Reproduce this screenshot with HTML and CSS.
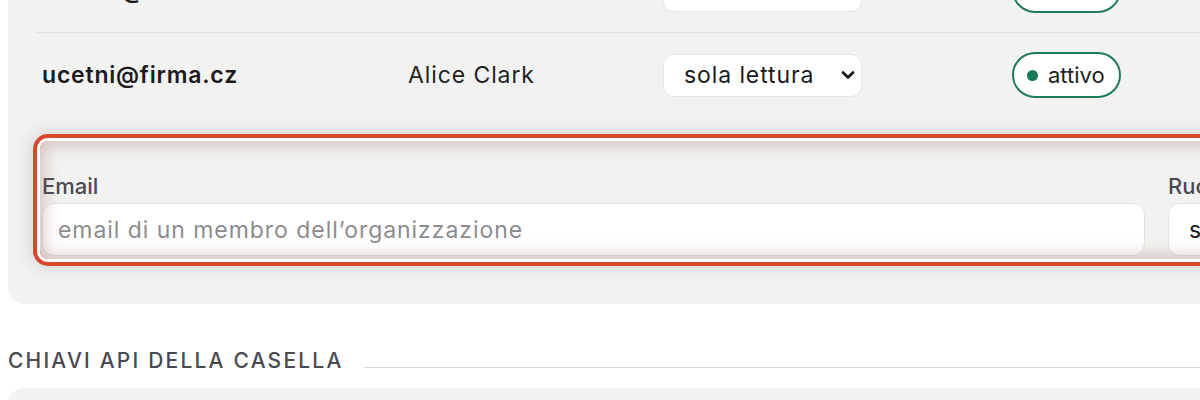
FILE: index.html
```html
<!DOCTYPE html>
<html lang="it">
<head>
<meta charset="utf-8">
<title>Membri</title>
<link rel="stylesheet" href="styles.css">
</head>
<body>
<div class="page">
  <section class="panel members">
    <div class="row">
      <div class="cell email">fatture@firma.cz</div>
      <div class="cell name">Jan Novák</div>
      <div class="cell">
        <div class="select"><span>modifica</span>
          <svg class="chev" width="14" height="10" viewBox="0 0 14 10"><path d="M2 2.5l5 5 5-5" fill="none" stroke="#1a1a1a" stroke-width="2.8" stroke-linecap="round" stroke-linejoin="round"/></svg>
        </div>
      </div>
      <div class="cell"><span class="badge"><span class="dot"></span>attivo</span></div>
    </div>
    <div class="row last">
      <div class="cell email">ucetni@firma.cz</div>
      <div class="cell name">Alice Clark</div>
      <div class="cell">
        <div class="select"><span>sola lettura</span>
          <svg class="chev" width="14" height="10" viewBox="0 0 14 10"><path d="M2 2.5l5 5 5-5" fill="none" stroke="#1a1a1a" stroke-width="2.8" stroke-linecap="round" stroke-linejoin="round"/></svg>
        </div>
      </div>
      <div class="cell"><span class="badge"><span class="dot"></span>attivo</span></div>
    </div>
    <form class="add-form">
      <div class="field">
        <label class="label" for="em">Email</label>
        <input id="em" class="input" type="text" placeholder="email di un membro dell’organizzazione">
      </div>
      <div class="field">
        <span class="label">Ruolo</span>
        <div class="select tall"><span>sola lettura</span>
          <svg class="chev" width="14" height="10" viewBox="0 0 14 10"><path d="M2 2.5l5 5 5-5" fill="none" stroke="#1a1a1a" stroke-width="2.8" stroke-linecap="round" stroke-linejoin="round"/></svg>
        </div>
      </div>
    </form>
  </section>
  <div class="section-title">
    <h2>CHIAVI API DELLA CASELLA</h2>
    <span class="rule"></span>
  </div>
  <section class="panel keys"></section>
</div>
</body>
</html>
```
FILE: styles.css
```css
html, body {
  margin: 0;
  background: #ffffff;
  overflow: hidden;
}
body {
  font-family: Inter, "Noto Sans", "DejaVu Sans", sans-serif;
  color: #1d1d22;
}
.page {
  margin-top: -80px;
  padding-left: 8px;
  width: 1500px;
}
.panel {
  background: #f2f2f0;
  border-radius: 16px;
  padding: 28px 28px 45px;
}
.row {
  display: grid;
  grid-template-columns: 366px 255px 349px 1fr;
  align-items: center;
  height: 84px;
  padding-left: 6px;
  border-bottom: 1px solid #e2e2df;
  font-size: 23px;
  letter-spacing: 0.9px;
}
.row.last {
  border-bottom: 0;
}
.email {
  font-weight: 600;
  color: #1b1b20;
  letter-spacing: 0.8px;
}
.name {
  color: #222226;
}
.select {
  display: flex;
  align-items: center;
  justify-content: space-between;
  width: 199px;
  height: 43px;
  box-sizing: border-box;
  padding: 0 6px 0 20px;
  background: #ffffff;
  border: 1px solid #e6e6e3;
  border-radius: 11px;
  font-size: 23px;
  letter-spacing: 0.9px;
  color: #1a1a1e;
}
.select.tall {
  height: 53px;
  width: 200px;
  border-radius: 12px;
}
.chev {
  display: block;
}
.badge {
  display: inline-flex;
  align-items: center;
  gap: 10px;
  height: 46px;
  box-sizing: border-box;
  padding: 0 14px 0 13px;
  border: 2px solid #1f7a58;
  border-radius: 23px;
  background: #ffffff;
  font-size: 22px;
  letter-spacing: 0;
  color: #1d1d22;
}
.dot {
  width: 11px;
  height: 11px;
  border-radius: 50%;
  background: #17785a;
}
.add-form {
  position: relative;
  margin: 24px 0 0 4px;
  padding: 33px 0 3px 2px;
  border-radius: 8px;
  display: grid;
  grid-template-columns: 1103px 200px;
  column-gap: 23px;
  box-shadow: 0 0 0 3px #ffffff, 0 0 0 7px #d9462b, 0 0 18px 10px rgba(0, 0, 0, 0.11);
}
.add-form::after {
  content: "";
  position: absolute;
  inset: 0;
  border-radius: 8px;
  box-shadow: inset 0 0 16px 4px rgba(150, 100, 90, 0.34);
  pointer-events: none;
}
.field {
  display: flex;
  flex-direction: column;
}
.label {
  display: block;
  font-size: 22px;
  font-weight: 500;
  line-height: 24px;
  color: #4a4a52;
  margin-bottom: 5px;
}
.input {
  width: 100%;
  height: 53px;
  box-sizing: border-box;
  border: 1px solid #e3e3e0;
  border-radius: 12px;
  padding: 0 15px;
  background: #ffffff;
  font-family: inherit;
  font-size: 23px;
  letter-spacing: 0.95px;
  color: #1d1d22;
  outline: none;
}
.input::placeholder {
  color: #8c8c8f;
}
.section-title {
  display: flex;
  align-items: baseline;
  gap: 21px;
  margin: 45px 0 15px;
}
.section-title h2 {
  margin: 0;
  font-size: 21px;
  font-weight: 500;
  line-height: 24px;
  letter-spacing: 2.2px;
  color: #4a4a52;
  white-space: nowrap;
}
.rule {
  flex: 1;
  height: 1px;
  background: #d9d9d7;
}
.keys {
  height: 120px;
  padding: 0;
}
```
